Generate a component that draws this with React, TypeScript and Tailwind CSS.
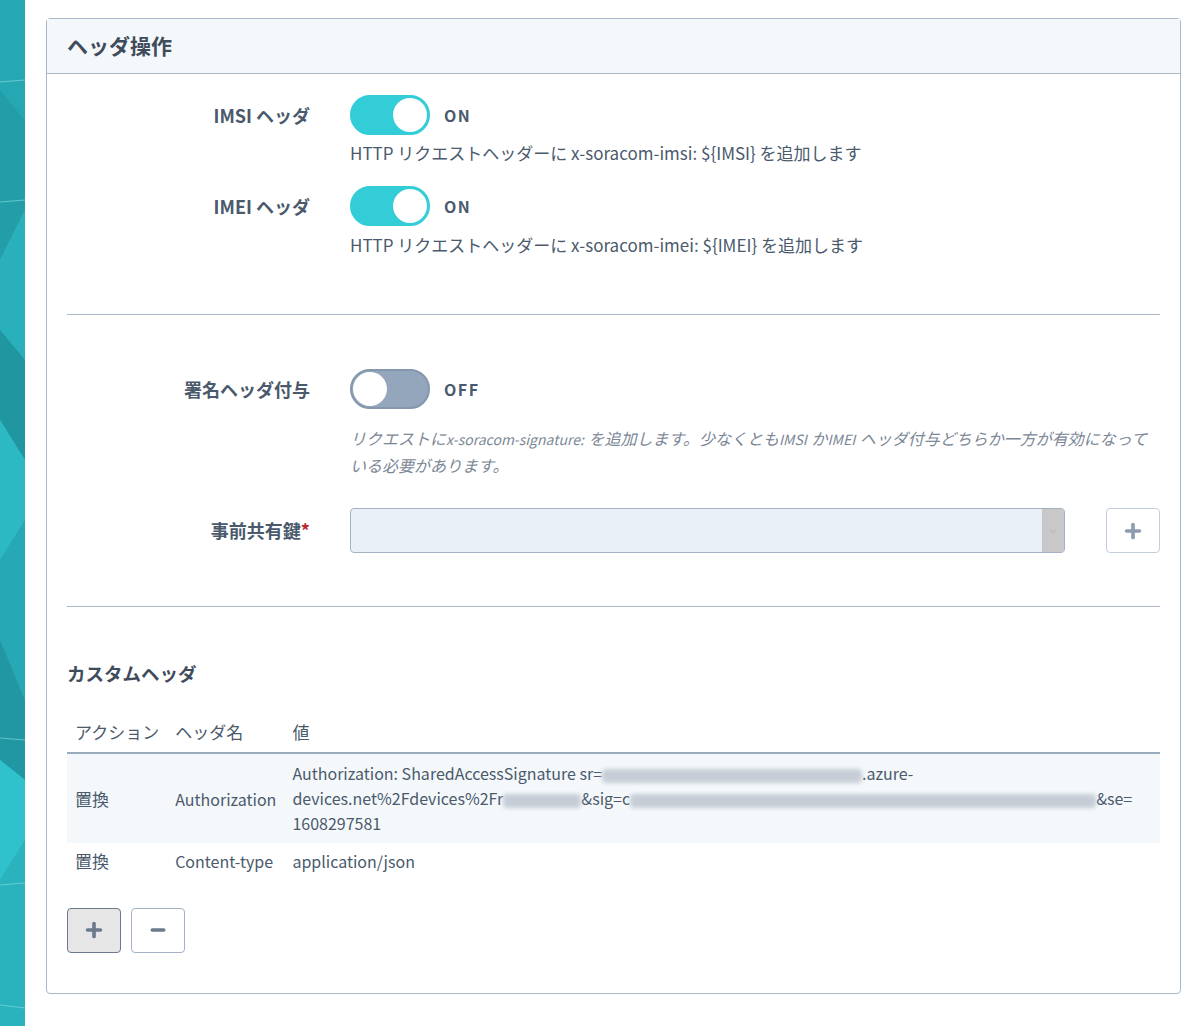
import { Plus, Minus, ChevronDown } from 'lucide-react';

const font = { fontFamily: '"Noto Sans CJK JP", "Noto Sans", sans-serif' };

function Toggle({ on }: { on: boolean }) {
  return (
    <div className="flex items-center gap-[14px]">
      <div
        className={
          on
            ? 'flex h-10 w-20 items-center justify-end rounded-full border-2 border-[#33cdd8] bg-[#33cdd8] px-[1px]'
            : 'flex h-10 w-20 items-center justify-start rounded-full border-2 border-[#8497ad] bg-[#94a6bb] px-[1px]'
        }
      >
        <div className="h-[34px] w-[34px] rounded-full bg-white" />
      </div>
      <span className="text-[16px] font-bold tracking-[1.5px] text-[#4a5a6c]">{on ? 'ON' : 'OFF'}</span>
    </div>
  );
}

function Blur({ w }: { w: number }) {
  return (
    <span
      className="inline-block h-[14px] rounded-sm bg-[#c6cdd6] align-middle blur-[2px]"
      style={{ width: w }}
    />
  );
}

// 日本語だけ少し大きめに
function Ja({ children }: { children: React.ReactNode }) {
  return <span className="text-[17px]">{children}</span>;
}

// イタリックの英字は詰まった字形
function Em({ children }: { children: React.ReactNode }) {
  return <span className="inline-block pr-[1px] text-[14px]">{children}</span>;
}

function SideArt() {
  return (
    <svg width="25" height="1026" viewBox="0 0 25 1026" preserveAspectRatio="none" className="block">
      <rect width="25" height="1026" fill="#2bb5bf" />
      <polygon points="0,0 25,0 25,120 0,90" fill="#26a8b3" />
      <polygon points="0,90 25,120 25,210 0,260" fill="#239ea9" />
      <polygon points="0,260 25,210 25,360 0,330" fill="#2ab0bb" />
      <polygon points="0,330 25,360 25,460 0,420" fill="#1f96a0" />
      <polygon points="0,420 25,460 25,520 0,560" fill="#2cb9c3" />
      <polygon points="0,560 25,520 25,700 0,640" fill="#26a9b4" />
      <polygon points="0,640 25,700 25,780 0,760" fill="#2097a2" />
      <polygon points="0,760 25,780 25,840 0,880" fill="#30c2cc" />
      <polygon points="0,880 25,840 25,1026 0,1026" fill="#2ab3bd" />
      <line x1="0" y1="82" x2="25" y2="80" stroke="#7fd8de" strokeWidth="0.7" />
      <line x1="0" y1="202" x2="25" y2="200" stroke="#7fd8de" strokeWidth="0.7" />
      <line x1="0" y1="738" x2="25" y2="740" stroke="#7fd8de" strokeWidth="0.7" />
      <line x1="0" y1="885" x2="25" y2="883" stroke="#7fd8de" strokeWidth="0.7" />
      <line x1="0" y1="1005" x2="25" y2="1008" stroke="#7fd8de" strokeWidth="0.7" />
    </svg>
  );
}

export default function App() {
  return (
    <div className="flex min-h-[1026px] bg-white text-[#4a5a6c]" style={font}>
      <div className="w-[25px] shrink-0">
        <SideArt />
      </div>

      <div className="flex-1 pb-[31px] pl-[21px] pr-[19px] pt-[18px]">
        <section className="rounded border border-[#a9b8c9]">
          <header className="flex h-[55px] items-center border-b border-[#a9b8c9] bg-[#f5f8fb] px-5">
            <h2 className="text-[21px] font-bold text-[#3f4c5c]">ヘッダ操作</h2>
          </header>

          <div className="px-5">
            {/* IMSI / IMEI */}
            <div className="grid grid-cols-[243px_1fr] gap-x-10 pt-[21px]">
              <div className="flex h-10 items-center justify-end text-[18px] font-bold">IMSI ヘッダ</div>
              <div>
                <Toggle on />
                <p className="mt-[6px] text-[17px] leading-6">
                  HTTP リクエストヘッダーに x-soracom-imsi: {'${IMSI}'} を追加します
                </p>
              </div>
              <div className="mt-[21px] flex h-10 items-center justify-end text-[18px] font-bold">IMEI ヘッダ</div>
              <div className="mt-[21px]">
                <Toggle on />
                <p className="mt-[7px] text-[17px] leading-6">
                  HTTP リクエストヘッダーに x-soracom-imei: {'${IMEI}'} を追加します
                </p>
              </div>
            </div>

            <hr className="mt-[57px] border-[#a9b8c9]" />

            {/* 署名 */}
            <div className="grid grid-cols-[243px_1fr] gap-x-10 pt-[54px]">
              <div className="flex h-10 items-center justify-end text-[18px] font-bold">署名ヘッダ付与</div>
              <div>
                <Toggle on={false} />
                <p className="mt-[16px] text-[16px] italic leading-[26px] text-[#7b8796]">
                  リクエストに<Em>x-soracom-signature:</Em> を追加します。少なくとも<Em>IMSI</Em> か<Em>IMEI</Em>{' '}
                  ヘッダ付与どちらか一方が有効になっている必要があります。
                </p>
              </div>
              <div className="mt-[30px] flex h-[45px] items-center justify-end text-[18px] font-bold">
                事前共有鍵<span className="text-[#c0272d]">*</span>
              </div>
              <div className="mt-[30px] flex items-center">
                <div className="flex h-[45px] flex-1 overflow-hidden rounded border border-[#a3b3c5] bg-[#e9f0f8]">
                  <div className="flex-1" />
                  <div className="flex w-[22px] items-center justify-center bg-[#c8c8c8]">
                    <ChevronDown size={12} strokeWidth={1} className="text-[#9a9a9a]" />
                  </div>
                </div>
                <button className="ml-[41px] flex h-[45px] w-[54px] items-center justify-center rounded border border-[#c3cfdc] bg-white">
                  <Plus size={22} strokeWidth={4} className="text-[#8e9cad]" />
                </button>
              </div>
            </div>

            <hr className="mt-[53px] border-[#a9b8c9]" />

            {/* カスタムヘッダ */}
            <h3 className="mt-[53px] text-[18.5px] font-bold text-[#3f4c5c]">カスタムヘッダ</h3>

            <table className="mt-[31px] w-full border-collapse text-left text-[16px]">
              <thead>
                <tr className="border-b-2 border-[#9aabbe]">
                  <th className="w-[100px] whitespace-nowrap px-2 pb-[8px] text-[17px] font-normal">アクション</th>
                  <th className="w-[116px] whitespace-nowrap px-2 pb-[8px] text-[17px] font-normal">ヘッダ名</th>
                  <th className="px-2 pb-[8px] text-[17px] font-normal">値</th>
                </tr>
              </thead>
              <tbody>
                <tr className="bg-[#f5f8fb]">
                  <td className="px-2 align-middle">
                    <Ja>置換</Ja>
                  </td>
                  <td className="whitespace-nowrap px-2 align-middle">Authorization</td>
                  <td className="break-all px-2 py-[7px] leading-[25px]">
                    Authorization: SharedAccessSignature sr=<Blur w={260} />.azure-
                    <br />
                    devices.net%2Fdevices%2Fr<Blur w={78} />&amp;sig=c<Blur w={466} />&amp;se=
                    <br />
                    1608297581
                  </td>
                </tr>
                <tr>
                  <td className="px-2 py-[5px]">
                    <Ja>置換</Ja>
                  </td>
                  <td className="px-2 py-[5px]">Content-type</td>
                  <td className="px-2 py-[5px]">application/json</td>
                </tr>
              </tbody>
            </table>

            <div className="mt-[29px] flex gap-[10px] pb-[40px]">
              <button className="flex h-[45px] w-[54px] items-center justify-center rounded border border-[#6b7a8c] bg-[#e6e6e6]">
                <Plus size={22} strokeWidth={4} className="text-[#6b7a8c]" />
              </button>
              <button className="flex h-[45px] w-[54px] items-center justify-center rounded border border-[#a3b3c5] bg-white">
                <Minus size={20} strokeWidth={4} className="text-[#6b7a8c]" />
              </button>
            </div>
          </div>
        </section>
      </div>
    </div>
  );
}
